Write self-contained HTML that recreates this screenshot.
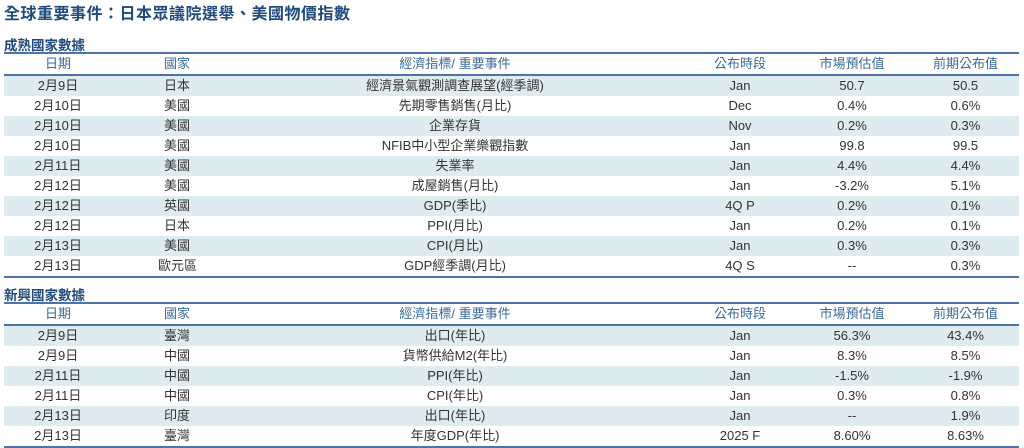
<!DOCTYPE html>
<html><head><meta charset="utf-8"><style>
body{margin:0;background:#fff;width:1024px;height:444px;overflow:hidden;font-family:"Liberation Sans","Noto Sans CJK TC",sans-serif;}
.t{position:absolute;left:4px;top:0px;font-size:16px;font-weight:bold;color:#1f4a7c;letter-spacing:0.5px}
.s{position:absolute;left:4px;font-size:13.5px;font-weight:bold;color:#1f4a7c}
table{position:absolute;left:4px;width:1015px;border-collapse:collapse;font-size:13px;color:#333;table-layout:fixed}
td{height:20px;padding:0;text-align:center;line-height:20px;white-space:nowrap}
tr.h td{color:#3b6a9a;border-top:2px solid #4f73a8;border-bottom:2px solid #4f73a8;height:19px}
tr.z td{background:#deebef}
tr:last-child td{border-bottom:2px solid #4f73a8}
td:nth-child(2){text-align:left;padding-left:52px}
td:nth-child(3){padding-right:82px}
td:nth-child(6){padding-left:8px}
</style></head><body>
<div class="t">全球重要事件：日本眾議院選舉、美國物價指數</div>
<div class="s" style="top:34px">成熟國家數據</div>
<table style="top:52px">
<colgroup><col style="width:108px"><col style="width:200px"><col style="width:368px"><col style="width:120px"><col style="width:104px"><col style="width:115px"></colgroup>
<tr class="h"><td>日期</td><td>國家</td><td>經濟指標/ 重要事件</td><td>公布時段</td><td>市場預估值</td><td>前期公布值</td></tr>
<tr class="z"><td>2月9日</td><td>日本</td><td>經濟景氣觀測調查展望(經季調)</td><td>Jan</td><td>50.7</td><td>50.5</td></tr>
<tr><td>2月10日</td><td>美國</td><td>先期零售銷售(月比)</td><td>Dec</td><td>0.4%</td><td>0.6%</td></tr>
<tr class="z"><td>2月10日</td><td>美國</td><td>企業存貨</td><td>Nov</td><td>0.2%</td><td>0.3%</td></tr>
<tr><td>2月10日</td><td>美國</td><td>NFIB中小型企業樂觀指數</td><td>Jan</td><td>99.8</td><td>99.5</td></tr>
<tr class="z"><td>2月11日</td><td>美國</td><td>失業率</td><td>Jan</td><td>4.4%</td><td>4.4%</td></tr>
<tr><td>2月12日</td><td>美國</td><td>成屋銷售(月比)</td><td>Jan</td><td>-3.2%</td><td>5.1%</td></tr>
<tr class="z"><td>2月12日</td><td>英國</td><td>GDP(季比)</td><td>4Q P</td><td>0.2%</td><td>0.1%</td></tr>
<tr><td>2月12日</td><td>日本</td><td>PPI(月比)</td><td>Jan</td><td>0.2%</td><td>0.1%</td></tr>
<tr class="z"><td>2月13日</td><td>美國</td><td>CPI(月比)</td><td>Jan</td><td>0.3%</td><td>0.3%</td></tr>
<tr><td>2月13日</td><td style="padding-left:46px">歐元區</td><td>GDP經季調(月比)</td><td>4Q S</td><td>--</td><td>0.3%</td></tr>
</table>
<div class="s" style="top:284px">新興國家數據</div>
<table style="top:302px">
<colgroup><col style="width:108px"><col style="width:200px"><col style="width:368px"><col style="width:120px"><col style="width:104px"><col style="width:115px"></colgroup>
<tr class="h"><td>日期</td><td>國家</td><td>經濟指標/ 重要事件</td><td>公布時段</td><td>市場預估值</td><td>前期公布值</td></tr>
<tr class="z"><td>2月9日</td><td>臺灣</td><td>出口(年比)</td><td>Jan</td><td>56.3%</td><td>43.4%</td></tr>
<tr><td>2月9日</td><td>中國</td><td>貨幣供給M2(年比)</td><td>Jan</td><td>8.3%</td><td>8.5%</td></tr>
<tr class="z"><td>2月11日</td><td>中國</td><td>PPI(年比)</td><td>Jan</td><td>-1.5%</td><td>-1.9%</td></tr>
<tr><td>2月11日</td><td>中國</td><td>CPI(年比)</td><td>Jan</td><td>0.3%</td><td>0.8%</td></tr>
<tr class="z"><td>2月13日</td><td>印度</td><td>出口(年比)</td><td>Jan</td><td>--</td><td>1.9%</td></tr>
<tr><td>2月13日</td><td>臺灣</td><td>年度GDP(年比)</td><td>2025 F</td><td>8.60%</td><td>8.63%</td></tr>
</table>
</body></html>
